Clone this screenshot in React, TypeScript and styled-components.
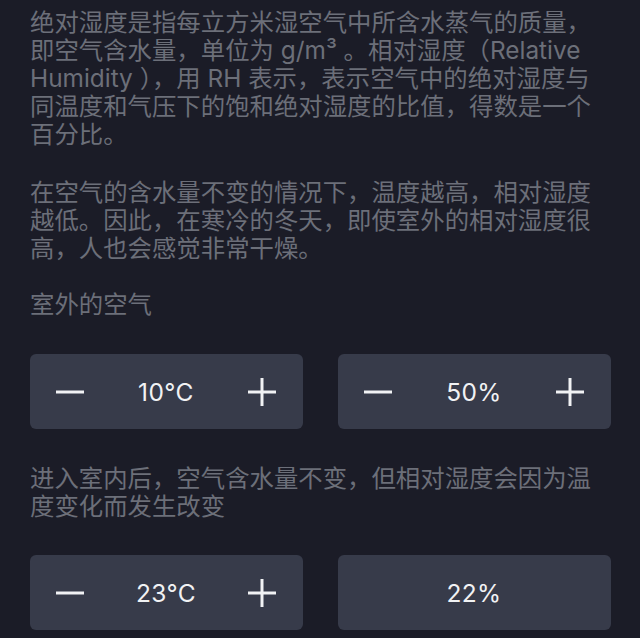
import React from "react";
import styled, { createGlobalStyle } from "styled-components";

const GlobalStyle = createGlobalStyle`
  html, body {
    margin: 0;
    padding: 0;
    background: #1b1c27;
  }
  body {
    font-family: "Inter", "Noto Sans CJK SC", "Noto Sans", sans-serif;
  }
`;

const Page = styled.div`
  min-height: 100vh;
  box-sizing: border-box;
  padding: 8px 29px 0 30px;
  background: #1b1c27;
  display: flex;
  flex-direction: column;
`;

const Text = styled.p<{ $mt?: number }>`
  margin: ${(p) => p.$mt ?? 0}px 0 0 0;
  padding-right: 11px;
  font-family: "Inter", "Noto Sans CJK SC", sans-serif;
  font-size: 24.4px;
  line-height: 28px;
  color: #6c6f79;
`;

const Row = styled.div<{ $mt: number }>`
  margin-top: ${(p) => p.$mt}px;
  display: grid;
  grid-template-columns: 1fr 1fr;
  gap: 35px;
`;

const Card = styled.div<{ $center?: boolean }>`
  height: 75px;
  box-sizing: border-box;
  border-radius: 6px;
  background: #373b4a;
  display: flex;
  align-items: center;
  justify-content: ${(p) => (p.$center ? "center" : "space-between")};
  padding: 0 27px 0 26px;
`;

const Value = styled.span`
  font-family: "Inter", "Noto Sans", sans-serif;
  font-size: 24.5px;
  color: #f1f2f4;
  letter-spacing: 0.4px;
`;

const IconButton = styled.button`
  width: 28px;
  height: 28px;
  padding: 0;
  border: 0;
  background: transparent;
  display: flex;
  align-items: center;
  justify-content: center;
  cursor: pointer;
`;

const MinusIcon = () => (
  <svg width="28" height="28" viewBox="0 0 28 28">
    <line x1="0" y1="14" x2="28" y2="14" stroke="#f1f2f4" strokeWidth="3" />
  </svg>
);

const PlusIcon = () => (
  <svg width="28" height="28" viewBox="0 0 28 28">
    <line x1="0" y1="14" x2="28" y2="14" stroke="#f1f2f4" strokeWidth="3" />
    <line x1="14" y1="0" x2="14" y2="28" stroke="#f1f2f4" strokeWidth="3" />
  </svg>
);

const Stepper: React.FC<{ value: string }> = ({ value }) => (
  <Card>
    <IconButton aria-label="减少">
      <MinusIcon />
    </IconButton>
    <Value>{value}</Value>
    <IconButton aria-label="增加">
      <PlusIcon />
    </IconButton>
  </Card>
);

export default function App() {
  return (
    <>
      <GlobalStyle />
      <Page>
        <Text>
          绝对湿度是指每立方米湿空气中所含水蒸气的质量，即空气含水量，单位为 g/m³ 。相对湿度（Relative Humidity ），用 RH 表示，表示空气中的绝对湿度与同温度和气压下的饱和绝对湿度的比值，得数是一个百分比。
        </Text>
        <Text $mt={30}>
          在空气的含水量不变的情况下，温度越高，相对湿度越低。因此，在寒冷的冬天，即使室外的相对湿度很高，人也会感觉非常干燥。
        </Text>
        <Text $mt={28}>室外的空气</Text>
        <Row $mt={36}>
          <Stepper value="10°C" />
          <Stepper value="50%" />
        </Row>
        <Text $mt={35}>
          进入室内后，空气含水量不变，但相对湿度会因为温度变化而发生改变
        </Text>
        <Row $mt={35}>
          <Stepper value="23°C" />
          <Card $center>
            <Value>22%</Value>
          </Card>
        </Row>
      </Page>
    </>
  );
}
